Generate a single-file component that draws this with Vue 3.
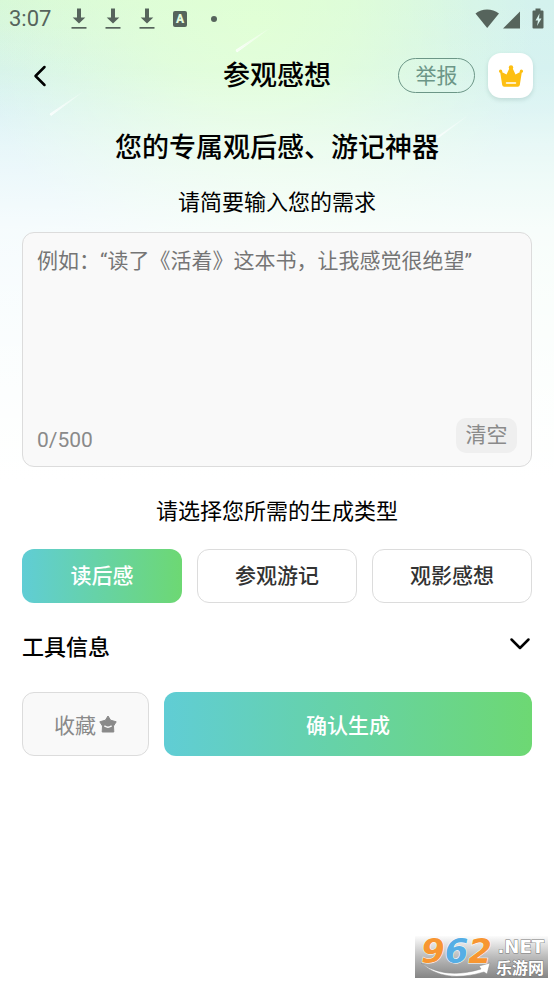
<script setup>
import { computed, ref } from 'vue'

const limit = 500
const prompt = ref('')
const types = ['读后感', '参观游记', '观影感想']
const selected = ref(types[0])
const favorite = ref(false)
const expanded = ref(false)
const count = computed(() => prompt.value.length)
</script>

<template>
  <div class="page">
    <svg class="streaks" viewBox="0 0 554 160" aria-hidden="true">
      <defs>
        <linearGradient id="streak" x1="0" y1="1" x2="1" y2="0">
          <stop offset="0" stop-color="#fff" stop-opacity="0.75" />
          <stop offset="1" stop-color="#fff" stop-opacity="0" />
        </linearGradient>
      </defs>
      <path d="M50 114 L84 91 L51 115.500Z" fill="url(#streak)" stroke="url(#streak)" />
      <path d="M236 50 L270 28 L237 52Z" fill="url(#streak)" stroke="url(#streak)" />
      <path d="M437 137 L470 114 L438 138Z" fill="url(#streak)" stroke="url(#streak)" stroke-opacity="0.600" />
    </svg>

    <div class="status">
      <span class="time">3:07</span>
      <svg v-for="n in 3" :key="n" class="download" viewBox="0 0 16 22" aria-hidden="true">
        <path d="M6 0.500h4v9h4.300L8 15.500 1.700 9.500H6z" />
        <path d="M0.500 19h15v1.700h-15z" />
      </svg>
      <span class="badge">A</span>
      <span class="dot"></span>
      <svg class="radio" viewBox="0 0 70 22" aria-hidden="true">
        <path d="M0.500 5.500C7 0 17 0 24 5.500L12.200 20z" />
        <path d="M45 3.500V20.500H28z" />
        <path d="M60.500 0.500h5v2h2q1 0 1 1v16q0 1-1 1h-9q-1 0-1-1v-16q0-1 1-1h2z" />
        <path class="bolt" d="M64.500 5.500l-4 7h2.500l-1 5.500 4.500-7.500H64z" />
      </svg>
    </div>

    <header class="header">
      <button class="back" type="button" aria-label="返回">
        <svg viewBox="0 0 14 22" aria-hidden="true"><path d="M11.500 2L2.500 11L11.500 20" /></svg>
      </button>
      <h1>参观感想</h1>
      <div class="tools">
        <button class="report" type="button">举报</button>
        <button class="vip" type="button" aria-label="会员">
          <svg viewBox="0 0 24 22" aria-hidden="true">
            <path d="M3.200 20L1 6L7.500 9.500L10.500 3H13.500L16.500 9.500L23 6L20.800 20Q20.500 21.800 18.800 21.800H5.200Q3.500 21.800 3.200 20Z" />
            <circle cx="12" cy="2.400" r="2.200" /><circle cx="1.600" cy="6.200" r="1.600" /><circle cx="22.400" cy="6.200" r="1.600" />
            <path class="band" d="M7.500 18h9" />
          </svg>
        </button>
      </div>
    </header>

    <main>
      <h2>您的专属观后感、游记神器</h2>
      <label class="caption" for="prompt">请简要输入您的需求</label>
      <div class="editor">
        <textarea id="prompt" v-model="prompt" :maxlength="limit" placeholder="例如：“读了《活着》这本书，让我感觉很绝望”"></textarea>
        <div class="editor-foot">
          <span>{{ count }}/{{ limit }}</span>
          <button type="button" @click="prompt = ''">清空</button>
        </div>
      </div>

      <p class="caption second">请选择您所需的生成类型</p>
      <div class="types">
        <button v-for="t in types" :key="t" type="button" :class="{ active: t === selected }" @click="selected = t">{{ t }}</button>
      </div>

      <button class="info" type="button" :aria-expanded="expanded" @click="expanded = !expanded">
        <span>工具信息</span>
        <svg viewBox="0 0 22 14" aria-hidden="true"><path d="M2.500 2.500L11 11L19.500 2.500" /></svg>
      </button>

      <div class="actions">
        <button class="favorite" type="button" :aria-pressed="favorite" @click="favorite = !favorite">
          <span>收藏</span>
          <svg viewBox="0 0 18 18" aria-hidden="true">
            <path d="M9 1L11.600 5.200L17.200 6.800L14.500 11L14.800 17H3.200L3.500 11L0.800 6.800L6.400 5.200Z" />
            <path class="smile" d="M5.800 11.200Q9 13.200 12.200 11.200" />
          </svg>
        </button>
        <button class="generate" type="button">确认生成</button>
      </div>
    </main>

    <div class="watermark">
      <svg class="swoosh" viewBox="0 0 133 42" aria-hidden="true">
        <path d="M6 27Q30 44 66 33L64 30L75 27L72 38L69 36Q29 48 6 27Z" />
      </svg>
      <div class="digits"><span>9</span><span class="blue">6</span><span>2</span></div>
      <div class="names">
        <span class="net">.NET</span>
        <span class="site">乐游网</span>
      </div>
    </div>
  </div>
</template>

<style>
body {
  margin: 0;
  background: #fff;
}
</style>

<style scoped>
.page {
  position: relative;
  box-sizing: border-box;
  min-height: 100vh;
  overflow: hidden;
  font-family: Roboto, "Noto Sans CJK SC", sans-serif;
  color: #000;
  background:
    linear-gradient(180deg, rgba(255, 255, 255, 0) 0, rgba(255, 255, 255, 0.1) 70px, rgba(255, 255, 255, 0.5) 150px, rgba(255, 255, 255, 0.8) 230px, #fff 480px),
    radial-gradient(ellipse 280px 260px at 46% 20px, #e0ffd5 0, rgba(224, 255, 213, 0.75) 35%, rgba(224, 255, 213, 0) 100%),
    radial-gradient(ellipse 300px 240px at 0 260px, rgba(208, 235, 252, 0.8) 0, rgba(208, 235, 252, 0.6) 40%, rgba(208, 235, 252, 0) 100%),
    linear-gradient(180deg, rgba(208, 240, 240, 0) 0, rgba(208, 240, 240, 0.8) 110px, rgba(222, 250, 232, 0.9) 300px),
    linear-gradient(90deg, #d7f8d8 0, #dcfadb 40%, #d4f2ee 85%, #d4f2ee 100%);
}
button,
textarea {
  box-sizing: border-box;
  margin: 0;
  padding: 0;
  border: 0;
  background: none;
  font: inherit;
  color: inherit;
}
button {
  cursor: pointer;
}
svg {
  display: block;
}
.streaks {
  position: absolute;
  top: 0;
  left: 0;
  width: 100%;
}
.status {
  position: relative;
  display: flex;
  align-items: center;
  height: 38px;
  padding: 0 9px;
  color: #56645c;
  fill: #56645c;
}
.time {
  width: 62px;
  font-size: 22px;
  line-height: 38px;
}
.download {
  width: 16px;
  height: 22px;
  margin-right: 18px;
}
.badge {
  width: 14px;
  height: 16px;
  border-radius: 2px;
  background: #56645c;
  color: #e2fbdc;
  font-size: 12px;
  font-weight: 900;
  line-height: 16px;
  text-align: center;
}
.dot {
  width: 6px;
  height: 6px;
  margin-left: 24px;
  border-radius: 50%;
  background: #56645c;
}
.radio {
  width: 70px;
  height: 22px;
  margin-left: auto;
}
.bolt {
  fill: #d8f3ee;
}
.header {
  position: relative;
  display: grid;
  grid-template-columns: 1fr auto 1fr;
  align-items: center;
  margin-top: 15px;
  padding: 0 21px;
}
.back {
  width: 14px;
  height: 22px;
  margin-left: 12px;
}
.back svg,
.info svg {
  fill: none;
  stroke: #000;
  stroke-width: 2.500;
  stroke-linecap: round;
  stroke-linejoin: round;
}
h1,
h2 {
  margin: 0;
  font-size: 27px;
  font-weight: 500;
  line-height: 40px;
  text-align: center;
}
.tools {
  display: flex;
  align-items: center;
  justify-content: flex-end;
  gap: 13px;
}
.report {
  width: 77px;
  height: 35px;
  border: 1px solid #6c9687;
  border-radius: 18px;
  color: #6c9687;
  font-size: 21px;
  line-height: 30px;
}
.vip {
  display: grid;
  place-items: center;
  width: 45px;
  height: 45px;
  border-radius: 13px;
  background: #fff;
  box-shadow: 0 2px 4px rgba(60, 110, 100, 0.18);
}
.vip svg {
  width: 24px;
  height: 22px;
  fill: #fdbf12;
}
.vip .band {
  stroke: #fff;
  stroke-width: 1.500;
  stroke-linecap: round;
}
main {
  position: relative;
  padding: 30px 22px 0;
}
.caption {
  display: block;
  margin: 19px 0 13px;
  font-size: 22px;
  line-height: 32px;
  text-align: center;
}
.editor {
  display: flex;
  flex-direction: column;
  box-sizing: border-box;
  height: 235px;
  padding: 12px 14px 13px;
  border: 1px solid #dcdcdc;
  border-radius: 12px;
  background: #f9f9f9;
}
textarea {
  flex: 1;
  width: 100%;
  resize: none;
  outline: none;
  font-size: 21px;
  line-height: 32px;
}
textarea::placeholder {
  color: #757575;
  opacity: 1;
}
.editor-foot {
  display: flex;
  align-items: center;
  justify-content: space-between;
  color: #8a8a8a;
  font-size: 21px;
}
.editor-foot span {
  padding-top: 8px;
}
.editor-foot button {
  width: 61px;
  height: 35px;
  border-radius: 10px;
  background: #efefef;
  line-height: 35px;
}
.second {
  margin: 29px 0 21px;
}
.types {
  display: grid;
  grid-template-columns: repeat(3, 1fr);
  gap: 15px;
}
.types button {
  height: 54px;
  border: 1px solid #dcdcdc;
  border-radius: 12px;
  background: #fff;
  color: #333;
  font-size: 21px;
  font-weight: 500;
  line-height: 52px;
}
.types .active,
.actions .generate {
  border: 0;
  background: linear-gradient(90deg, #60cdd5, #6dd873);
  color: #fff;
}
.info {
  display: flex;
  align-items: center;
  justify-content: space-between;
  width: 100%;
  margin: 29px 0 28px;
  font-size: 22px;
  font-weight: 500;
  line-height: 32px;
}
.info svg {
  width: 22px;
  height: 14px;
  margin: 0 1px 8px;
}
.actions {
  display: grid;
  grid-template-columns: 127fr 368fr;
  gap: 15px;
  font-size: 21px;
}
.actions button {
  height: 64px;
  border-radius: 12px;
}
.favorite {
  display: flex;
  align-items: center;
  justify-content: center;
  gap: 3px;
  border: 1px solid #dcdcdc;
  background: #f9f9f9;
  color: #8a8a8a;
}
.favorite svg {
  width: 18px;
  height: 18px;
  fill: #8a8a8a;
  stroke: #8a8a8a;
  stroke-linejoin: round;
}
.favorite .smile {
  fill: none;
  stroke: #f9f9f9;
  stroke-width: 1.500;
  stroke-linecap: round;
}
.generate {
  font-weight: 500;
}
.watermark {
  position: absolute;
  right: 6px;
  bottom: 6px;
  display: flex;
  justify-content: space-between;
  box-sizing: border-box;
  width: 133px;
  height: 42px;
  padding: 0 4px 0 6px;
  background: linear-gradient(180deg, #fcfcfc, #bbb 50%, #858585);
}
.swoosh {
  position: absolute;
  top: 0;
  left: 0;
  width: 133px;
  height: 42px;
  fill: #fff;
  stroke: #888;
  stroke-width: 0.500;
}
.digits {
  position: relative;
  display: flex;
  height: 30px;
  color: #f79632;
  font: italic 700 34px/30px "DejaVu Sans", sans-serif;
  -webkit-text-stroke: 1px #fff;
  paint-order: stroke;
}
.digits .blue {
  color: #55aee5;
}
.names {
  position: relative;
  display: flex;
  flex-direction: column;
  align-items: flex-end;
  padding-top: 1px;
  color: #fff;
  -webkit-text-stroke: 1px #777;
  paint-order: stroke;
}
.net {
  font: 700 18px/20px "DejaVu Sans", sans-serif;
}
.site {
  font: 700 16px/20px "Noto Sans CJK SC", sans-serif;
}
</style>
